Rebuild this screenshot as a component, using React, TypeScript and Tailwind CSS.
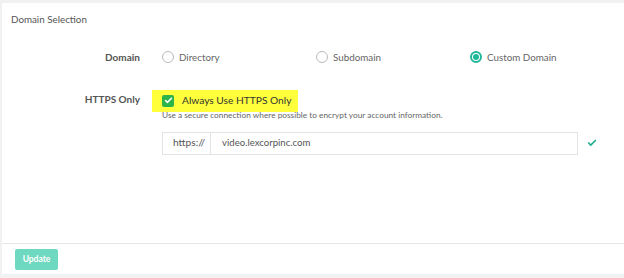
import { Check } from "lucide-react";

const options = [
  { id: "directory", label: "Directory" },
  { id: "subdomain", label: "Subdomain" },
  { id: "custom", label: "Custom Domain" },
];

export default function App() {
  const selected = "custom";

  return (
    <div className="w-[624px] h-[278px] bg-[#f1f1f1] pt-[3px] pb-[4px] pl-[2px] font-['Lato',sans-serif]">
      <div className="h-full bg-white flex flex-col">
        <div className="px-[9px] pt-[9px] text-[9.8px] leading-[14px] text-[#555]">Domain Selection</div>

        <div className="flex-1">
          {/* Domain row */}
          <div className="flex items-center mt-[23px] h-[16px]">
            <div className="w-[138px] text-right text-[10px] font-bold text-[#555]">Domain</div>
            <div className="ml-[22px] flex-1 grid grid-cols-3">
              {options.map((o) => (
                <label key={o.id} className="flex items-center gap-[5px]">
                  {o.id === selected ? (
                    <span className="w-[12px] h-[12px] rounded-full border-2 border-[#23b89a] flex items-center justify-center">
                      <span className="w-[6px] h-[6px] rounded-full bg-[#23b89a]" />
                    </span>
                  ) : (
                    <span className="w-[12px] h-[12px] rounded-full border border-[#bbb] bg-white" />
                  )}
                  <span className="text-[9.8px] text-[#666]">{o.label}</span>
                </label>
              ))}
            </div>
          </div>

          {/* HTTPS row */}
          <div className="flex items-start mt-[22px]">
            <div className="w-[138px] text-right text-[10px] font-bold text-[#555] pt-[5px]">HTTPS Only</div>
            <div className="ml-[12px] flex-1">
              <div className="inline-flex items-center gap-[8px] bg-[#ffff3c] pl-[10px] pr-[7px] h-[22px]">
                <span className="w-[12px] h-[12px] rounded-[2px] bg-[#2cb44a] flex items-center justify-center">
                  <Check size={9} strokeWidth={4} className="text-white" />
                </span>
                <span className="text-[10.2px] text-[#333]">Always Use HTTPS Only</span>
              </div>
              <div className="pl-[10px] text-[8.3px] text-[#666] leading-[10px] mt-[-2px]">
                Use a secure connection where possible to encrypt your account information.
              </div>
              <div className="flex items-center mt-[12px] pl-[10px]">
                <div className="flex h-[23px] w-[416px] border border-[#e3e3e3]">
                  <div className="w-[48px] pl-[10px] flex items-center border-r border-[#e3e3e3] text-[10.2px] text-[#555]">https://</div>
                  <div className="px-[11px] flex items-center text-[9.6px] text-[#555]">video.lexcorpinc.com</div>
                </div>
                <Check size={10} strokeWidth={4} className="ml-[9px] text-[#1fb08f]" />
              </div>
            </div>
          </div>
        </div>

        <div className="border-t border-[#e6e6e6] h-[31px] flex items-center px-[13px]">
          <button className="h-[21px] w-[43px] rounded-[2px] bg-[#6fd8c0] text-white text-[8.5px] font-bold">
            Update
          </button>
        </div>
      </div>
    </div>
  );
}
